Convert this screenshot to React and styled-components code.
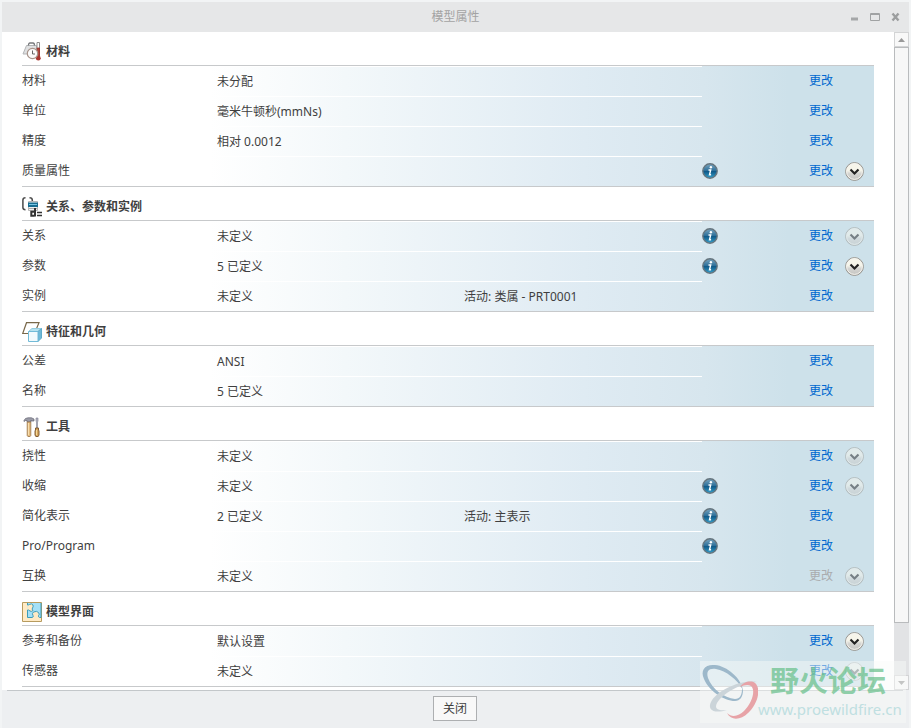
import React from "react";
import styled, { createGlobalStyle } from "styled-components";

const sections = [
  {
    id: "material",
    title: "材料",
    icon: MaterialIcon,
    rows: [
      { label: "材料", value: "未分配" },
      { label: "单位", value: "毫米牛顿秒(mmNs)" },
      { label: "精度", value: "相对 0.0012" },
      { label: "质量属性", info: true, expand: "on" },
    ],
  },
  {
    id: "relations",
    title: "关系、参数和实例",
    icon: RelationsIcon,
    rows: [
      { label: "关系", value: "未定义", info: true, expand: "off" },
      { label: "参数", value: "5 已定义", info: true, expand: "on" },
      { label: "实例", value: "未定义", active: "活动: 类属 - PRT0001" },
    ],
  },
  {
    id: "features",
    title: "特征和几何",
    icon: FeaturesIcon,
    rows: [
      { label: "公差", value: "ANSI" },
      { label: "名称", value: "5 已定义" },
    ],
  },
  {
    id: "tools",
    title: "工具",
    icon: ToolsIcon,
    rows: [
      { label: "挠性", value: "未定义", expand: "off" },
      { label: "收缩", value: "未定义", info: true, expand: "off" },
      { label: "简化表示", value: "2 已定义", active: "活动: 主表示", info: true },
      { label: "Pro/Program", info: true },
      { label: "互换", value: "未定义", expand: "off", disabled: true },
    ],
  },
  {
    id: "interface",
    title: "模型界面",
    icon: InterfaceIcon,
    rows: [
      { label: "参考和备份", value: "默认设置", expand: "on" },
      { label: "传感器", value: "未定义", expand: "off" },
    ],
  },
];

function MaterialIcon() {
  return (
    <svg width="20" height="20" viewBox="0 0 20 20" aria-hidden="true">
      <path d="M4.500 3.500h10v8.500H1z" fill="#dfe0e1" stroke="#b3b5b7" />
      <path d="M6.500 3.500q0-2.500 1.500-2.500h3q1.500 0 1.500 2.500" fill="none" stroke="#77797c" strokeWidth="1.300" />
      <path d="M15 .500h2.500v13H15z" fill="#fff" stroke="#8d8d8d" />
      <path d="M15.200 6h2.300v9h-2.300z" fill="#b2453c" stroke="#963029" strokeWidth=".800" />
      <circle cx="16.300" cy="16.200" r="2.400" fill="#a93630" />
      <circle cx="10.500" cy="11.500" r="5.200" fill="#fcfcfc" stroke="#a8948b" strokeWidth="1.200" />
      <path d="M10.500 8.500v3.500H13" fill="none" stroke="#666" />
    </svg>
  );
}

function RelationsIcon() {
  return (
    <svg width="20" height="20" viewBox="0 0 20 20" aria-hidden="true">
      <path d="M3.500 .800Q.900 .800 .900 3v7.500q0 2.200 2.600 2.200M7.500 .800Q10.300 .800 10.300 3v1.500" fill="none" stroke="#4a4a4a" strokeWidth="1.500" />
      <path d="M6.500 4.500h9v9h-9z" fill="#f1f1f1" stroke="#b5b5b5" />
      <path d="M6 5.500h10v4.500H6z" fill="#176d91" />
      <path d="M7 7.500h8" stroke="#78c6e3" />
      <path d="M7 11.500h8" stroke="#aaa" />
      <path d="M13 11v8.500M12.500 14.700H9.300v4h3.200" fill="none" stroke="#333" strokeWidth="2" />
      <path d="M15 15.500h5M15 18.500h5" stroke="#333" strokeWidth="1.600" />
    </svg>
  );
}

function FeaturesIcon() {
  return (
    <svg width="20" height="20" viewBox="0 0 20 20" aria-hidden="true">
      <path d="M4.500 .700H17L12.500 11.500H.700z" fill="#fff" stroke="#79684a" strokeWidth="1.200" />
      <path d="M6.500 9.500l3.500-3h9.500l-3.500 3z" fill="#b4e2ef" stroke="#94cce0" />
      <path d="M16 9.500l3.500-3V16L16 19.500z" fill="#6fb9d8" stroke="#5faccb" />
      <path d="M6.500 9.500H16v10H6.500z" fill="#f1fafd" stroke="#72bbd8" />
    </svg>
  );
}

function ToolsIcon() {
  return (
    <svg width="20" height="20" viewBox="0 0 20 20" aria-hidden="true">
      <path d="M2 3.500Q3 .800 6 .800H9.500L12 2v2H9.500L9 3.200V5H5V3.500Q3.500 3 2 4.500z" fill="#9a9ba6" stroke="#666673" strokeWidth=".700" />
      <path d="M5.200 5h3.600v13.500l-.700 1H5.900l-.700-1z" fill="#e2ba7d" stroke="#9a7549" strokeWidth=".800" />
      <path d="M6.500 6v12" stroke="#f8dfb0" />
      <path d="M14 1h2v3l-.500 1v6h-1V5L14 4z" fill="#b3b4c0" stroke="#7c7d90" strokeWidth=".600" />
      <path d="M13.500 11h3v2l.500 1v4l-.800 1.500h-2.400L13 18v-4l.500-1z" fill="#d6a65e" stroke="#765029" strokeWidth=".900" />
      <path d="M14.500 13v5" stroke="#f6d99a" />
    </svg>
  );
}

function InterfaceIcon() {
  return (
    <svg width="20" height="20" viewBox="0 0 20 20" aria-hidden="true">
      <path d="M.500 .500h19v19H.500z" fill="#ffeac5" stroke="#b79b5e" />
      <path d="M5.500 1H19v14.500H5.500z" fill="#a4e0f7" />
      <path
        d="M5.500 3q1.500 0 2-.500 2-1.500 3.500 .500.500 2-.500 3-1 1 .500 2.500-1.500 1.500-3 .500-1.500-1.500-2.500-1z"
        fill="#ffeac5"
      />
      <path
        d="M5.500 1v2q1.500 0 2-.500 2-1.500 3.500 .500.500 2-.500 3-1 1 .500 2.500-1.500 1.500-3 .500-1.500-1.500-2.500-1v7.500h4.500"
        fill="none"
        stroke="#3c9cba"
      />
      <path
        d="M10 15.500q2-.500 1-2-1.500-2 .500-3.500 3.500-1.500 5 .500 1.500 2 0 3-.500 1.500 1 2H19v1.500h-9z"
        fill="#ffeac5"
      />
      <path
        d="M10 15.500q2-.500 1-2-1.500-2 .500-3.500 3.500-1.500 5 .500 1.500 2 0 3-.500 1.500 1 2H19V1"
        fill="none"
        stroke="#3c9cba"
      />
    </svg>
  );
}

function InfoIcon() {
  return (
    <svg width="16" height="16" viewBox="0 0 16 16" aria-hidden="true">
      <defs>
        <linearGradient id="info-fill" x1="0" y1="0" x2="0" y2="1">
          <stop offset="0" stopColor="#7ba6c0" />
          <stop offset=".480" stopColor="#2d6f99" />
          <stop offset=".520" stopColor="#0f5887" />
          <stop offset="1" stopColor="#35a0ca" />
        </linearGradient>
      </defs>
      <circle cx="8" cy="8" r="7.200" fill="url(#info-fill)" stroke="#66757e" strokeWidth="1.400" />
      <circle cx="8.900" cy="4.300" r="1.200" fill="#fff" />
      <path d="M6.500 7h2.200L7.500 11.800h1.600" fill="none" stroke="#fff" strokeWidth="1.400" />
    </svg>
  );
}

function ChevronIcon() {
  return (
    <svg width="19" height="19" viewBox="0 0 19 19" aria-hidden="true">
      <defs>
        <linearGradient id="chevron-fill" x1="0" y1="0" x2="0" y2="1">
          <stop offset=".450" stopColor="#f6f5ea" />
          <stop offset=".600" stopColor="#d5d5d2" />
          <stop offset="1" stopColor="#c3c3c0" />
        </linearGradient>
      </defs>
      <circle cx="9.500" cy="9.500" r="8.900" fill="url(#chevron-fill)" stroke="#96938d" />
      <circle cx="9.500" cy="9.500" r="7.900" fill="none" stroke="#f5f4ef" />
      <path d="M5.500 7.500l4 4 4-4" fill="none" stroke="#222" strokeWidth="2.200" />
    </svg>
  );
}

function PropertyRow({ label, value, active, info, expand, disabled }) {
  return (
    <tr>
      <LabelCell scope="row">{label}</LabelCell>
      <ValueCell>{value}</ValueCell>
      <ValueCell>{active}</ValueCell>
      <Cell>
        {info && (
          <IconButton type="button" aria-label={`${label} 信息`}>
            <InfoIcon />
          </IconButton>
        )}
      </Cell>
      <Cell>
        <ChangeLink href="#" $disabled={disabled} aria-disabled={disabled}>
          更改
        </ChangeLink>
      </Cell>
      <Cell>
        {expand && (
          <IconButton type="button" aria-label={`${label} 展开`} disabled={expand === "off"}>
            <ChevronIcon />
          </IconButton>
        )}
      </Cell>
    </tr>
  );
}

function Section({ id, title, icon: Icon, rows }) {
  return (
    <section>
      <Heading id={id}>
        <Icon />
        {title}
      </Heading>
      <Table aria-labelledby={id}>
        <colgroup>
          <Col $width="195px" />
          <Col $width="29%" />
          <Col />
          <Col $width="107px" />
          <Col $width="36px" />
          <Col $width="29px" />
        </colgroup>
        <tbody>
          {rows.map((row) => (
            <PropertyRow key={row.label} {...row} />
          ))}
        </tbody>
      </Table>
    </section>
  );
}

function ScrollBar() {
  return (
    <ScrollTrack>
      <ScrollButton type="button" aria-label="向上滚动">
        <svg width="7" height="4" viewBox="0 0 7 4" aria-hidden="true">
          <path d="M0 4l3.500-4L7 4z" fill="#999" />
        </svg>
      </ScrollButton>
      <ScrollThumb />
      <ScrollGap />
      <ScrollButton type="button" aria-label="向下滚动">
        <svg width="7" height="4" viewBox="0 0 7 4" aria-hidden="true">
          <path d="M0 0l3.500 4L7 0z" fill="#999" />
        </svg>
      </ScrollButton>
    </ScrollTrack>
  );
}

function Watermark() {
  return (
    <WatermarkStyled>
      <svg width="58" height="62" viewBox="0 0 58 62" aria-hidden="true">
        <path
          d="M43 29C41 17 27 5 15 4 5 3 0 9 4 18c5 12 20 22 31 22 5 0 8-4 8-11l-1-1c0 6-2 10-7 10C24 37 12 28 8 17 6 10 9 7 16 8c10 2 21 10 27 21z"
          fill="#9db8ca"
        />
        <path
          d="M57 21C42 18 17 29 11 41c-4 8 3 12 16 8-9 1-13-1-10-7C23 32 41 22 57 21z"
          fill="#cbd4d9"
        />
        <path
          d="M40 26c3-5 11-7 15-4 7 6 2 22-7 30-7 7-17 8-21 0 5 5 12 3 17-2 8-8 12-21 7-25-3-2-7-1-11 1z"
          fill="#e7a3a7"
        />
      </svg>
      <div>
        <WatermarkName>野火论坛</WatermarkName>
        <WatermarkUrl>www.proewildfire.cn</WatermarkUrl>
      </div>
    </WatermarkStyled>
  );
}

function App() {
  return (
    <>
      <GlobalStyle />
      <WindowStyled>
        <TitleBar>
          <h1>模型属性</h1>
          <div className="controls">
            <button type="button" aria-label="最小化">
              <svg width="9" height="10" viewBox="0 0 9 10" aria-hidden="true">
                <path d="M1 7h7" stroke="#a5a7a8" strokeWidth="3" />
              </svg>
            </button>
            <button type="button" aria-label="最大化">
              <svg width="10" height="10" viewBox="0 0 10 10" aria-hidden="true">
                <path d="M.500 1.500h9v7h-9zM0 2.500h10" fill="none" stroke="#a0a2a3" />
              </svg>
            </button>
            <button type="button" aria-label="关闭窗口">
              <svg width="10" height="10" viewBox="0 0 10 10" aria-hidden="true">
                <path d="M1.500 1.500l6 7M7.500 1.500l-6 7" stroke="#9c9e9f" strokeWidth="2.400" />
              </svg>
            </button>
          </div>
        </TitleBar>
        <Body>
          <Content>
            {sections.map((section) => (
              <Section key={section.id} {...section} />
            ))}
          </Content>
          <ScrollBar />
        </Body>
        <Footer>
          <CloseButton type="button">关闭</CloseButton>
        </Footer>
        <Watermark />
      </WindowStyled>
    </>
  );
}

const GlobalStyle = createGlobalStyle`
  * {
    box-sizing: border-box;
  }

  body {
    margin: 0;
    background: #edeff1;
    color: #3f3f3f;
    font-family: "Noto Sans", "Noto Sans CJK SC", sans-serif;
    font-size: 12px;
    line-height: 18px;
  }

  button {
    padding: 0;
    border: 0;
    background: none;
    color: inherit;
    font: inherit;
  }

  svg {
    display: block;
    flex: none;
  }
`;

const WindowStyled = styled.div`
  position: relative;
  display: flex;
  flex-direction: column;
  min-height: 100vh;
  border: 2px solid #f2f4f5;
  border-bottom: 0;
`;

const TitleBar = styled.header`
  display: grid;
  grid-template-columns: 1fr auto 1fr;
  align-items: center;
  height: 30px;
  background: #e6e7e8;

  h1 {
    grid-column: 2;
    margin: 0;
    color: #a3a3a3;
    font-size: 12px;
    font-weight: 400;
  }

  .controls {
    display: flex;
    justify-content: flex-end;
    gap: 11px;
    padding-right: 8px;
  }
`;

const Body = styled.main`
  display: flex;
  flex: 1;
  background: #fff;
`;

const Content = styled.div`
  flex: 1;
  min-width: 0;
  padding: 0 20px 3px;
`;

const Heading = styled.h2`
  display: flex;
  align-items: center;
  gap: 4px;
  height: 33px;
  margin: 0;
  padding-top: 6px;
  font-size: 12px;
  font-weight: 700;
`;

const Table = styled.table`
  width: 100%;
  table-layout: fixed;
  border-spacing: 0;
  border-top: 1px solid #c7c9cb;
  border-bottom: 1px solid #c7c9cb;
  background: linear-gradient(
    90deg,
    #fff 22%,
    #f3f8fa 38%,
    #dfebf3 66%,
    #d7e6ee 80%,
    #cde1ea 90%
  );
`;

const Col = styled.col`
  width: ${(props) => props.$width || "auto"};
`;

const Cell = styled.td`
  height: 30px;
  padding: 0;
  vertical-align: middle;
`;

const LabelCell = styled(Cell).attrs({ as: "th" })`
  font-weight: 400;
  text-align: left;
`;

const ValueCell = styled(Cell)`
  border-top: 1px solid #fff;
`;

const ChangeLink = styled.a`
  color: ${(props) => (props.$disabled ? "#aaacae" : "#0068cf")};
  text-decoration: none;
`;

const IconButton = styled.button`
  display: block;

  &:disabled {
    opacity: 0.5;
  }
`;

const ScrollTrack = styled.div`
  display: flex;
  flex-direction: column;
  width: 15px;
  background: #e2e3e5;
`;

const ScrollButton = styled.button`
  display: flex;
  align-items: center;
  justify-content: center;
  height: 15px;
  border: 1px solid #d3d4d5;
  background: #f8f8f8;
`;

const ScrollThumb = styled.div`
  flex: 11;
  border: 1px solid #b9bbbd;
  background: #f7f7f7;
`;

const ScrollGap = styled.div`
  flex: 1;
`;

const Footer = styled.footer`
  display: flex;
  align-items: center;
  justify-content: center;
  height: 38px;
  margin: 0 6px 0 5px;
  padding-bottom: 2px;
  border-top: 1px solid #c3c7ca;
`;

const CloseButton = styled.button`
  width: 44px;
  height: 25px;
  border: 1px solid #adafb1;
  background: #f8f8f8;
`;

const WatermarkStyled = styled.div`
  position: absolute;
  right: 3px;
  bottom: 5px;
  display: flex;
  width: 206px;
  height: 62px;
  background: rgba(249, 250, 248, 0.45);
  pointer-events: none;
`;

const WatermarkName = styled.div`
  padding-left: 12px;
  color: rgba(99, 190, 135, 0.7);
  font-size: 29px;
  font-weight: 700;
  line-height: 40px;
  white-space: nowrap;
`;

const WatermarkUrl = styled.div`
  color: #bfdfe1;
  font-size: 15px;
  line-height: 16px;
`;

export default App;
